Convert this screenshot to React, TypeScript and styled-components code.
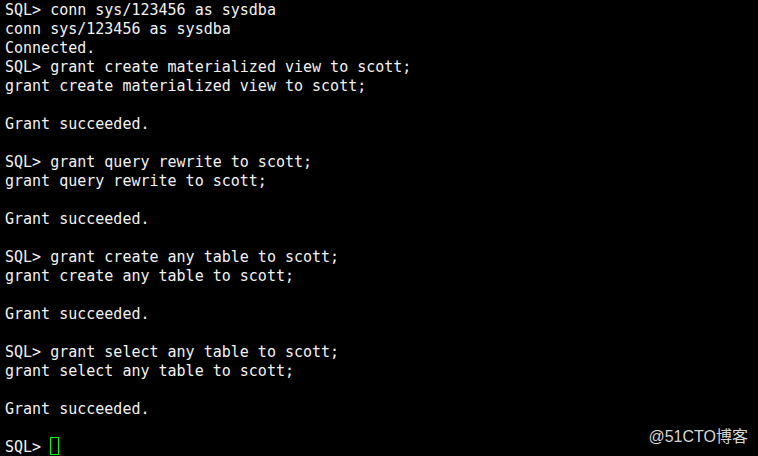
import { createGlobalStyle } from 'styled-components';
import styled from 'styled-components';

const GlobalStyle = createGlobalStyle`
  html, body {
    margin: 0;
    padding: 0;
    background: #000;
  }
`;

const Screen = styled.div`
  position: relative;
  width: 758px;
  height: 456px;
  background: #000;
  overflow: hidden;
`;

const Console = styled.pre`
  margin: 0;
  padding: 1px 0 0 5px;
  font-family: "DejaVu Sans Mono", "Liberation Mono", monospace;
  font-size: 15px;
  line-height: 19px;
  color: #f2f2f2;
  white-space: pre;
`;

const Line = styled.div`
  height: 19px;
  display: flex;
  align-items: center;
`;

const Cursor = styled.span`
  display: inline-block;
  align-self: flex-start;
  width: 7px;
  height: 16px;
  border: 1px solid #00ff00;
  margin-top: -1px;
`;

const Watermark = styled.div`
  position: absolute;
  right: 10px;
  bottom: 9px;
  font-family: "Liberation Sans", "Noto Sans CJK SC", sans-serif;
  font-size: 16px;
  color: #d6d6d6;
`;

const lines = [
  'SQL> conn sys/123456 as sysdba',
  'conn sys/123456 as sysdba',
  'Connected.',
  'SQL> grant create materialized view to scott;',
  'grant create materialized view to scott;',
  '',
  'Grant succeeded.',
  '',
  'SQL> grant query rewrite to scott;',
  'grant query rewrite to scott;',
  '',
  'Grant succeeded.',
  '',
  'SQL> grant create any table to scott;',
  'grant create any table to scott;',
  '',
  'Grant succeeded.',
  '',
  'SQL> grant select any table to scott;',
  'grant select any table to scott;',
  '',
  'Grant succeeded.',
  '',
];

export default function App() {
  return (
    <Screen>
      <GlobalStyle />
      <Console>
        {lines.map((l, i) => (
          <Line key={i}>{l}</Line>
        ))}
        <Line>
          {'SQL> '}
          <Cursor />
        </Line>
      </Console>
      <Watermark>@51CTO博客</Watermark>
    </Screen>
  );
}
